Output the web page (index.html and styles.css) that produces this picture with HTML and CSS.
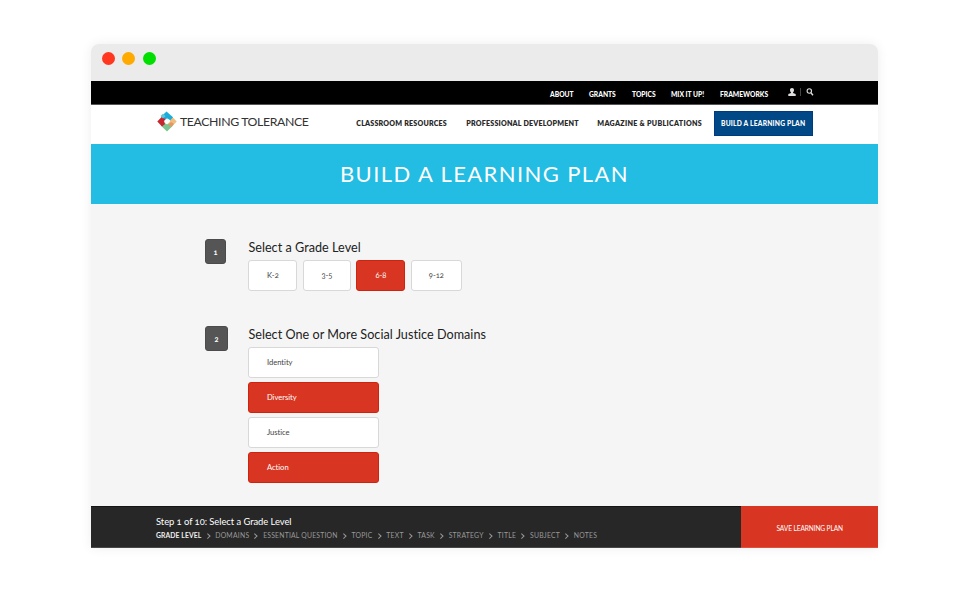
FILE: index.html
```html
<!DOCTYPE html>
<html lang="en">
<head>
<meta charset="utf-8">
<title>Build a Learning Plan</title>
<link rel="stylesheet" href="styles.css">
</head>
<body>
<div class="window">
  <div class="titlebar"><i class="dot red"></i><i class="dot amber"></i><i class="dot green"></i></div>
  <nav class="topnav">
    <a>ABOUT</a><a>GRANTS</a><a>TOPICS</a><a class="mix">MIX IT UP!</a><a class="frameworks">FRAMEWORKS</a>
    <span class="tools">
      <svg width="8" height="8" viewBox="0 0 8 8" fill="#dedede"><path d="M4 0C2.700 0 2 .9 2 2.100c0 1.100.5 1.800 1 2.300v.7L.3 6v2h7.400V6L5 5.100v-.7c.5-.5 1-1.200 1-2.300C6 .9 5.300 0 4 0z"/></svg>
      <i class="divider"></i>
      <svg width="8" height="8" viewBox="0 0 8 8" fill="none" stroke="#dedede"><circle cx="3.300" cy="3" r="2.200" stroke-width="1.100"/><path d="M4.900 4.700 7 7.200" stroke-width="1.400"/></svg>
    </span>
  </nav>
  <header class="header">
    <svg class="mark" width="20" height="21" viewBox="0 0 20 21">
      <path fill="#f0bd7d" d="m14 4.500 5.700 6-5.500 5.700L10.500 13l2.500-2.200-.3-3z"/>
      <path fill="#7cc492" d="m16 14.500-6 6L4 14.800 6.800 11.500l3 1.700 2.900-.5z"/>
      <path fill="#c8262f" d="M5 15.500.3 10.500 6 4.500l3.200 3.200L7 10l1 3z"/>
      <path fill="#19addd" d="M4 5.800 9.500.5 16 6.200l-2.700 3-2.800-1.700L8 8z"/>
      <path fill="#60c6d5" d="m3.500 5 2.300-2.300L8.500 5 6 7.500z"/>
      <path fill="#e59762" d="m14 11 3 2-3 3-2.500-2.500z"/>
    </svg>
    <span class="brand">TEACHING TOLERANCE</span>
    <nav class="mainnav"><a class="n1">CLASSROOM RESOURCES</a><a class="n2">PROFESSIONAL DEVELOPMENT</a><a class="n3">MAGAZINE &amp; PUBLICATIONS</a></nav>
    <a class="plan"><span>BUILD A LEARNING PLAN</span></a>
  </header>
  <div class="hero"><h1>BUILD A LEARNING PLAN</h1></div>
  <main class="content">
    <section class="step grade">
      <span class="number">1</span>
      <div>
        <h2>Select a Grade Level</h2>
        <div class="levels"><button>K-2</button><button>3-5</button><button class="on">6-8</button><button>9-12</button></div>
      </div>
    </section>
    <section class="step domain">
      <span class="number">2</span>
      <div>
        <h2>Select One or More Social Justice Domains</h2>
        <div class="domains"><button>Identity</button><button class="on">Diversity</button><button>Justice</button><button class="on">Action</button></div>
      </div>
    </section>
  </main>
  <footer class="footer">
    <div class="progress">
      <p class="status">Step 1 of 10: Select a Grade Level</p>
      <div class="crumbs"><b>GRADE LEVEL</b><i></i><span>DOMAINS</span><i></i><span class="long">ESSENTIAL QUESTION</span><i></i><span>TOPIC</span><i></i><span>TEXT</span><i></i><span>TASK</span><i></i><span>STRATEGY</span><i></i><span>TITLE</span><i></i><span>SUBJECT</span><i></i><span>NOTES</span></div>
    </div>
    <a class="save">SAVE LEARNING PLAN</a>
  </footer>
</div>
</body>
</html>
```
FILE: styles.css
```css
* { box-sizing: border-box; }
body { margin: 0; height: 600px; overflow: hidden; background: #fff; font-family: Lato, "Open Sans", sans-serif; font-variant-numeric: oldstyle-nums; font-variant-ligatures: none; white-space: nowrap; }
h1, h2, p { margin: 0; }
.window { width: 787px; height: 504px; margin: 44px 0 0 91px; display: flex; flex-direction: column; border-radius: 8px 8px 0 0; box-shadow: 0 0 12px rgba(0,0,0,.07); }
.titlebar { height: 37px; background: #ebebeb; border-radius: 8px 8px 0 0; display: flex; padding: 8px 0 0 11px; }
.dot { width: 13px; height: 13px; border-radius: 50%; margin-right: 7px; }
.red { background: #ff3720; }
.amber { background: #ffaa00; }
.green { background: #00df00; margin-left: .5px; }
.topnav { height: 24px; background: #000; border-bottom: 1px solid #555; display: grid; grid-template-columns: 39px 43px 39px 49px 68px auto; padding-left: 459px; color: #fff; font-size: 6.7px; font-weight: 900; line-height: 26px; }
.tools { display: flex; height: 8px; margin-top: 7px; margin-left: -.5px; }
.divider { width: 1px; background: #454545; margin: 0 5px 0 4px; }
.header { height: 39px; background: #fff; display: flex; align-items: flex-start; padding-left: 66px; }
.mark { margin-top: 6px; }
.brand { width: 179px; margin-left: 3px; line-height: 34px; font-size: 12.3px; letter-spacing: -.39px; color: #333; }
.mainnav { display: grid; grid-template-columns: 110px 131px 117px; margin-left: -2.7px; font-size: 7.1px; font-weight: 800; line-height: 37px; letter-spacing: .2px; color: #2a2a2a; }
.n3 { letter-spacing: .3px; }
.plan { width: 99px; height: 25px; margin-top: 6px; margin-left: -.8px; border: 1px solid #003b80; background: #004986; color: #fff; font-size: 6.7px; font-weight: 900; letter-spacing: .2px; line-height: 23px; padding-left: 6.5px; }
.hero { height: 60px; background: #23bce3; color: #fff; padding-left: 249px; }
h1 { font-size: 22px; line-height: 60px; font-weight: 400; letter-spacing: 1.4px; }
.content { height: 302px; background: #f5f5f5; padding: 35px 0 0 114px; }
.step { display: flex; height: 87px; }
.number { width: 21px; height: 25px; margin-right: 22.4px; border-radius: 3px; background: #555; border: 1px solid #4b4b4b; color: #fff; text-align: center; font-size: 7.5px; line-height: 25px; font-weight: 700; }
.domain .number { width: 23px; margin-right: 20.4px; }
h2 { height: 20.7px; font-size: 12.6px; line-height: 18px; font-weight: 400; letter-spacing: .04px; color: #222; }
button { height: 31.5px; padding: 0 0 1px; font: 7.6px Lato, sans-serif; font-variant-numeric: oldstyle-nums; font-variant-ligatures: none; border: 1px solid #d8d8d8; border-radius: 3px; background: #fff; color: #444; }
button.on { background: #d83622; border-color: #d0230f; color: #fff; }
.levels { display: grid; grid-template-columns: 49px 48px 49px 51px; column-gap: 5.500px; }
.domains { display: grid; width: 131px; row-gap: 3.6px; }
.domains button { text-align: left; padding-left: 17.5px; }
.footer { height: 42px; display: flex; background: #272727; }
.progress { width: 650.4px; border-top: 1px solid #151515; border-bottom: 1px solid #4b4748; padding: 8px 0 0 65px; }
.status { font-size: 9.4px; line-height: 14px; letter-spacing: -.04px; color: #fff; }
.crumbs { display: flex; font-size: 6.8px; line-height: 13.5px; letter-spacing: .26px; color: #999; }
.crumbs b { color: #eee; letter-spacing: .1px; }
.long { letter-spacing: .22px; }
.crumbs i { width: 3.5px; height: 3.5px; border: solid #999; border-width: 1px 1px 0 0; transform: rotate(45deg); margin: 5px 6.2px 0 4.100px; }
.save { flex: 1; background: #d83622; color: #fff; text-align: center; font-size: 6.6px; letter-spacing: -.12px; line-height: 44px; border-bottom: 1px solid #e0503d; }
```
